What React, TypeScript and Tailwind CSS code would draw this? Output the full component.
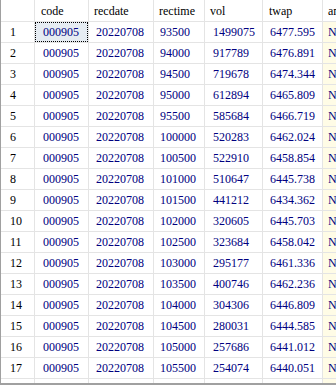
import React from "react";

const rows: [string, string, string][] = [
  ["93500", "1499075", "6477.595"],
  ["94000", "917789", "6476.891"],
  ["94500", "719678", "6474.344"],
  ["95000", "612894", "6465.809"],
  ["95500", "585684", "6466.719"],
  ["100000", "520283", "6462.024"],
  ["100500", "522910", "6458.854"],
  ["101000", "510647", "6445.738"],
  ["101500", "441212", "6434.362"],
  ["102000", "320605", "6445.703"],
  ["102500", "323684", "6458.042"],
  ["103000", "295177", "6461.336"],
  ["103500", "400746", "6462.236"],
  ["104000", "304306", "6446.809"],
  ["104500", "280031", "6444.585"],
  ["105000", "257686", "6441.012"],
  ["105500", "254074", "6440.051"],
];

// grid cell, padding is set per column
const cell = "border border-[#e4e4e4] h-[21px] whitespace-nowrap overflow-hidden";
const head = `${cell} h-[22px] font-normal text-left`;

export default function App() {
  return (
    <div className="w-[336px] h-[387px] overflow-hidden bg-white">
      <div className="h-[385px] overflow-hidden border-l border-b-2 border-[#a0a0a0] font-['Liberation_Serif',serif] text-[12px] leading-none">
        <table className="table-fixed border-collapse w-[400px] -mt-px -ml-px">
          <colgroup>
            <col className="w-[34px]" />
            <col className="w-[54px]" />
            <col className="w-[65px]" />
            <col className="w-[51px]" />
            <col className="w-[58px]" />
            <col className="w-[60px]" />
            <col className="w-[78px]" />
          </colgroup>
          <thead>
            <tr className="text-black">
              <th className={head}></th>
              <th className={`${head} pl-[6px]`}>code</th>
              <th className={`${head} pl-[5px]`}>recdate</th>
              <th className={`${head} pl-[5px]`}>rectime</th>
              <th className={`${head} pl-[5px]`}>vol</th>
              <th className={`${head} pl-[6px]`}>twap</th>
              <th className={`${head} pl-[5px]`}>amount</th>
            </tr>
          </thead>
          <tbody>
            {rows.map((r, i) => (
              <tr key={i} className="text-[#000080]">
                <td className={`${cell} text-black pl-[9px]`}>{i + 1}</td>
                <td className={`${cell} pl-0`}>
                  {i === 0 ? (
                    <div className="h-[20px] border border-dotted border-black bg-[#e6ecf2] pl-[7px] flex items-center">000905</div>
                  ) : (
                    <div className="pl-[8px]">000905</div>
                  )}
                </td>
                <td className={`${cell} pl-[7px]`}>20220708</td>
                <td className={`${cell} pl-[6px]`}>{r[0]}</td>
                <td className={`${cell} pl-[8px]`}>{r[1]}</td>
                <td className={`${cell} pl-[7px]`}>{r[2]}</td>
                <td className={`${cell} pl-[5px] bg-[#fffce6]`}>NULL</td>
              </tr>
            ))}
            <tr>
              <td className={cell}></td>
              <td className={cell}></td>
              <td className={cell}></td>
              <td className={cell}></td>
              <td className={cell}></td>
              <td className={cell}></td>
              <td className={`${cell} bg-[#fffce6]`}></td>
            </tr>
          </tbody>
        </table>
      </div>
    </div>
  );
}
